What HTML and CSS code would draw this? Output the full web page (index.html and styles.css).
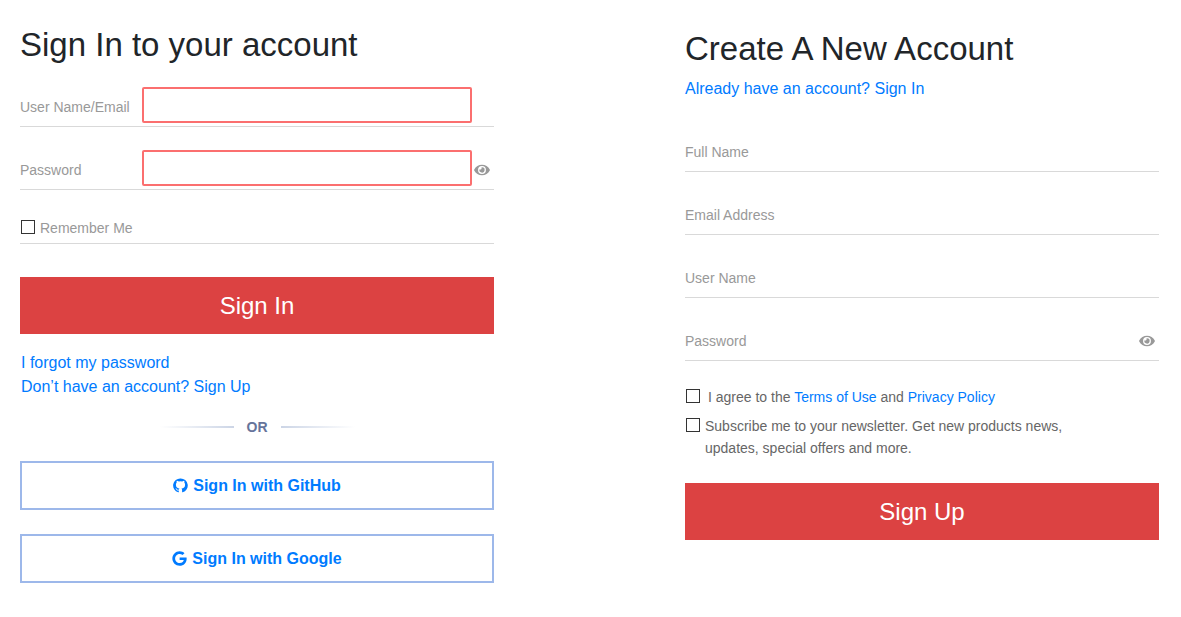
FILE: index.html
```html
<!DOCTYPE html>
<html lang="en">
<head>
<meta charset="utf-8">
<title>Sign In or Create an Account</title>
<link rel="stylesheet" href="styles.css">
</head>
<body>
<svg class="sprite" aria-hidden="true">
  <symbol id="eye" viewBox="0 0 576 512"><path d="M572.52 241.4C518.29 135.59 410.93 64 288 64S57.68 135.64 3.48 241.41a32.35 32.35 0 0 0 0 29.19C57.71 376.41 165.07 448 288 448s230.32-71.64 284.52-177.41a32.35 32.35 0 0 0 0-29.19zM288 400a144 144 0 1 1 144-144 143.93 143.93 0 0 1-144 144zm0-240a95.31 95.31 0 0 0-25.31 3.79 47.85 47.85 0 0 1-66.9 66.9A95.78 95.78 0 1 0 288 160z"/></symbol>
</svg>
<main class="page">
  <form class="panel" novalidate>
    <h1 class="title">Sign In to your account</h1>
    <div class="field">
      <label class="field-label" for="login-user">User Name/Email</label>
      <input class="field-input invalid" id="login-user" type="text" required>
    </div>
    <div class="field">
      <label class="field-label" for="login-password">Password</label>
      <input class="field-input invalid" id="login-password" type="password" required>
      <button class="reveal" type="button" aria-label="Show password"><svg class="eye"><use href="#eye"/></svg></button>
    </div>
    <div class="remember">
      <input class="check" id="remember" type="checkbox">
      <label for="remember">Remember Me</label>
    </div>
    <button class="submit" type="submit">Sign In</button>
    <div class="links">
      <a href="#forgot">I forgot my password</a>
      <a href="#signup">Don’t have an account? Sign Up</a>
    </div>
    <div class="divider">OR</div>
    <div class="providers">
      <button class="provider" type="button">
        <svg class="brand" viewBox="0 0 15 15" aria-hidden="true"><path d="M7.5.4A7.1 7.1 0 0 0 5.2 14.3c.4.1.6-.1.6-.4v-1.5c-1.6.4-2.2-.3-2.6-1.2-.3-.6-.8-.8-.9-1 .9-.3 1.5.6 1.8 1 .5.7 1.2.6 1.8.3.1-.5.3-.8.6-1-2-.3-3.6-1.2-3.6-3.8 0-.9.3-1.6.8-2.1-.2-.6-.1-1.4.1-1.9.8 0 1.5.4 2 .8a7 7 0 0 1 3.4 0c.6-.4 1.2-.8 2-.8.3.6.3 1.4.1 1.9.5.6.8 1.2.8 2.1 0 2.6-1.6 3.5-3.6 3.8.4.3.6.9.6 1.6v1.8c0 .3.2.5.6.4A7.1 7.1 0 0 0 7.5.4z"/></svg>
        Sign In with GitHub
      </button>
      <button class="provider" type="button">
        <svg class="brand" viewBox="0 0 488 512" aria-hidden="true"><path d="M488 261.8C488 403.3 391.1 504 248 504 110.8 504 0 393.2 0 256S110.8 8 248 8c66.8 0 123 24.5 166.3 64.9l-67.5 64.9C258.5 52.6 94.3 116.6 94.3 256c0 86.5 69.1 156.6 153.7 156.6 98.2 0 135-70.4 140.8-106.9H248v-85.3h236.1c2.3 12.7 3.9 24.9 3.9 41.4z"/></svg>
        Sign In with Google
      </button>
    </div>
  </form>

  <form class="panel register" novalidate>
    <h1 class="title">Create A New Account</h1>
    <a class="switch" href="#signin">Already have an account? Sign In</a>
    <div class="field">
      <label class="field-label" for="full-name">Full Name</label>
      <input class="field-input" id="full-name" type="text">
    </div>
    <div class="field">
      <label class="field-label" for="email">Email Address</label>
      <input class="field-input" id="email" type="email">
    </div>
    <div class="field">
      <label class="field-label" for="user-name">User Name</label>
      <input class="field-input" id="user-name" type="text">
    </div>
    <div class="field">
      <label class="field-label" for="new-password">Password</label>
      <input class="field-input" id="new-password" type="password">
      <button class="reveal" type="button" aria-label="Show password"><svg class="eye"><use href="#eye"/></svg></button>
    </div>
    <div class="consents">
      <div class="consent wide">
        <input class="check" id="agree" type="checkbox">
        <label for="agree">I agree to the <a href="#terms">Terms of Use</a> and <a href="#privacy">Privacy Policy</a></label>
      </div>
      <div class="consent">
        <input class="check" id="subscribe" type="checkbox">
        <label for="subscribe">Subscribe me to your newsletter. Get new products news, updates, special offers and more.</label>
      </div>
    </div>
    <button class="submit" type="submit">Sign Up</button>
  </form>
</main>
</body>
</html>
```

FILE: styles.css
```css
* {
  box-sizing: border-box;
}

body {
  margin: 0;
  background: #fff;
  color: #212529;
  font: 16px/24px "Liberation Sans", Arial, sans-serif;
}

a {
  color: #007bff;
  text-decoration: none;
}

button {
  font-family: inherit;
  cursor: pointer;
}

.sprite {
  display: none;
}

.page {
  display: grid;
  grid-template-columns: 1fr 1fr;
  gap: 191px;
  padding: 24px 22px 24px 20px;
}

.panel {
  display: flex;
  flex-direction: column;
}

.register {
  padding-top: 4px;
}

.title {
  margin: 0;
  padding-top: 1px;
  font-size: 33px;
  font-weight: 400;
  line-height: 39px;
}

.switch {
  margin: 9px 0 8px;
}

.field {
  display: flex;
  align-items: flex-end;
  height: 63px;
  padding: 0 22px 3px 0;
  border-bottom: 1px solid #d9d9d9;
  color: #999;
  font-size: 14px;
  line-height: 22px;
}

.field:has(.reveal) {
  padding-right: 4px;
}

.field-label {
  flex: none;
  width: 122px;
  padding-bottom: 5px;
}

.field-input {
  flex: 1;
  min-width: 0;
  height: 36px;
  padding: 0 8px;
  border: 2px solid transparent;
  border-radius: 2px;
  background: transparent;
  font: inherit;
  color: #333;
  outline: none;
}

.invalid {
  border-color: #fb6f6f;
}

.reveal {
  display: flex;
  margin-left: 2px;
  padding: 0 0 9px;
  border: 0;
  background: none;
}

.eye {
  width: 16px;
  height: 14px;
  fill: #999;
}

.check {
  flex: none;
  appearance: none;
  width: 14px;
  height: 14px;
  margin: 0;
  border: 1px solid #333;
  background: #fff;
}

.check:checked {
  background: #007bff;
}

.remember {
  display: flex;
  align-items: flex-end;
  gap: 5px;
  height: 54px;
  padding: 0 0 9px 1px;
  border-bottom: 1px solid #d9d9d9;
  color: #999;
  font-size: 14px;
  line-height: 12px;
}

.submit {
  height: 57px;
  border: 0;
  background: #dc4242;
  color: #fff;
  font-size: 24px;
}

.remember + .submit {
  margin-top: 33px;
}

.links {
  display: flex;
  flex-direction: column;
  align-items: flex-start;
  padding: 17px 1px 0;
}

.divider {
  display: flex;
  justify-content: center;
  align-items: center;
  gap: 13px;
  margin: 16px 0 22px;
  color: #66749b;
  font-size: 14px;
  font-weight: 700;
}

.divider::before,
.divider::after {
  content: "";
  width: 74px;
  height: 2px;
  background: linear-gradient(to right, transparent, #ccd5e6);
}

.divider::after {
  background: linear-gradient(to left, transparent, #ccd5e6);
}

.providers {
  display: grid;
  gap: 24px;
}

.provider {
  display: flex;
  justify-content: center;
  align-items: center;
  gap: 5px;
  height: 49px;
  border: 2px solid #9db8ea;
  background: #fff;
  color: #007bff;
  font-size: 16px;
  font-weight: 700;
}

.brand {
  width: 15px;
  height: 15px;
  fill: currentColor;
}

.consents {
  display: grid;
  gap: 7px;
  padding: 25px 80px 24px 1px;
  color: #666;
  font-size: 14px;
  line-height: 22px;
}

.consent {
  display: flex;
  gap: 5px;
}

.consent .check {
  margin-top: 3px;
}

.wide {
  gap: 8px;
}
```
